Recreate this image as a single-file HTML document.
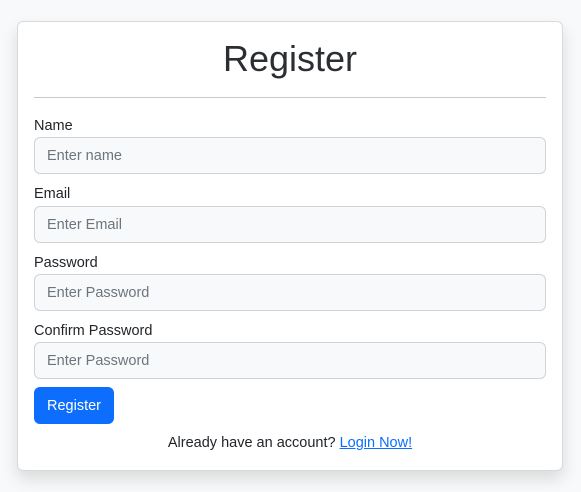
<!DOCTYPE html>
<html><head><style>
body{margin:0;background:#f8f9fa;width:581px;height:492px;font-family:"Liberation Sans",sans-serif;color:#212529;}
.card{position:absolute;left:17px;top:21px;width:544px;height:448px;background:#fff;border:1px solid #d9dadc;border-radius:6px;box-shadow:0 8px 16px rgba(0,0,0,.12);}
h1{position:absolute;left:0;right:0;top:16px;margin:0;text-align:center;font-weight:normal;font-size:36px;line-height:42px;color:#2b2f33;}
.hr{position:absolute;left:16px;width:512px;top:75px;height:1px;background:#c8c9cb;}
.lbl{position:absolute;left:16px;font-size:14.5px;line-height:18px;}
.in{position:absolute;left:16px;width:510px;height:35px;background:#f8f9fa;border:1px solid #ced4da;border-radius:6px;box-sizing:content-box;font-size:14.5px;color:#6c757d;line-height:37px;text-indent:12px;}
.btn{position:absolute;left:16px;top:365px;width:80px;height:37px;background:#0d6efd;color:#fff;border-radius:6px;font-size:14.5px;line-height:39px;text-align:center;}
.ft{position:absolute;left:0;right:0;top:412px;text-align:center;font-size:14.5px;line-height:18px;}
.ft a{color:#0d6efd;text-decoration:underline;}
</style></head><body>
<div class="card">
<h1>Register</h1>
<div class="hr"></div>
<div class="lbl" style="top:95px">Name</div>
<div class="in" style="top:115px">Enter name</div>
<div class="lbl" style="top:163px">Email</div>
<div class="in" style="top:184px">Enter Email</div>
<div class="lbl" style="top:232px">Password</div>
<div class="in" style="top:252px">Enter Password</div>
<div class="lbl" style="top:300px">Confirm Password</div>
<div class="in" style="top:320px">Enter Password</div>
<div class="btn">Register</div>
<div class="ft">Already have an account? <a>Login Now!</a></div>
</div>
</body></html>
